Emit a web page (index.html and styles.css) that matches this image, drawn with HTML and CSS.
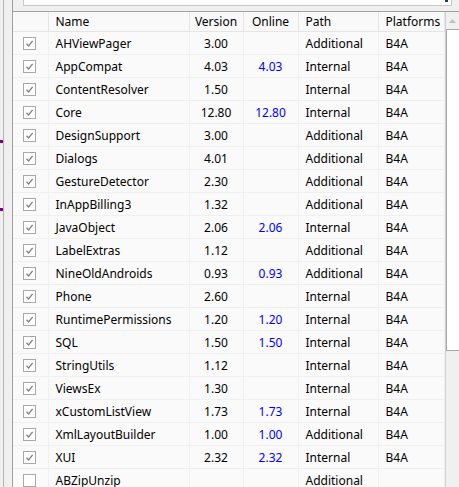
FILE: index.html
```html
<!DOCTYPE html>
<html>
<head>
<meta charset="utf-8">
<link rel="stylesheet" href="styles.css">
</head>
<body>
<div class="app">
  <div class="strip">
    <div class="marks"><span class="mark m1"></span><span class="mark m2"></span></div>
    <div class="vline"></div>
  </div>
  <div class="main">
    <div class="topbar"><div class="search"><span class="search-glyph"></span></div></div>
    <div class="gridwrap">
      <table class="grid">
        <colgroup>
          <col class="c-chk"><col class="c-name"><col class="c-ver"><col class="c-onl"><col class="c-path"><col class="c-plat">
        </colgroup>
        <thead>
          <tr><th></th><th class="l">Name</th><th>Version</th><th>Online</th><th class="l">Path</th><th class="l">Platforms</th></tr>
        </thead>
        <tbody id="rows"></tbody>
      </table>
      <div class="scrollbar">
        <div class="sb-up"><svg width="7" height="4" viewBox="0 0 7 4"><polygon points="0,4 7,4 3.5,0" fill="#c0c0c0"/></svg></div>
        <div class="sb-thumb"></div>
        <div class="sb-track"></div>
      </div>
    </div>
  </div>
</div>
<script>
const data = [
 ["AHViewPager","3.00","","Additional","B4A",1],
 ["AppCompat","4.03","4.03","Internal","B4A",1],
 ["ContentResolver","1.50","","Internal","B4A",1],
 ["Core","12.80","12.80","Internal","B4A",1],
 ["DesignSupport","3.00","","Additional","B4A",1],
 ["Dialogs","4.01","","Additional","B4A",1],
 ["GestureDetector","2.30","","Additional","B4A",1],
 ["InAppBilling3","1.32","","Additional","B4A",1],
 ["JavaObject","2.06","2.06","Internal","B4A",1],
 ["LabelExtras","1.12","","Additional","B4A",1],
 ["NineOldAndroids","0.93","0.93","Additional","B4A",1],
 ["Phone","2.60","","Internal","B4A",1],
 ["RuntimePermissions","1.20","1.20","Internal","B4A",1],
 ["SQL","1.50","1.50","Internal","B4A",1],
 ["StringUtils","1.12","","Internal","B4A",1],
 ["ViewsEx","1.30","","Internal","B4A",1],
 ["xCustomListView","1.73","1.73","Internal","B4A",1],
 ["XmlLayoutBuilder","1.00","1.00","Additional","B4A",1],
 ["XUI","2.32","2.32","Internal","B4A",1],
 ["ABZipUnzip","","","Additional","",0]
];
const tick = '<svg width="11" height="11" viewBox="0 0 11 11"><path d="M2.5 5.8 L4.6 8 L8.6 2.8" fill="none" stroke="#808080" stroke-width="1.3"/></svg>';
document.getElementById('rows').innerHTML = data.map(r =>
 `<tr><td class="chk"><span class="box">${r[5]?tick:''}</span></td><td class="l">${r[0]}</td><td>${r[1]}</td><td class="onl">${r[2]}</td><td class="l">${r[3]}</td><td class="l">${r[4]}</td></tr>`
).join('');
</script>
</body>
</html>
```
FILE: styles.css
```css
html, body { margin: 0; padding: 0; }
body {
  background: #f0f0f0;
  font-family: "Noto Sans", "Segoe UI", sans-serif;
  font-size: 12px;
  color: #000;
  width: 459px;
  height: 487px;
  overflow: hidden;
}
.app { display: flex; height: 487px; overflow: hidden; }
.strip {
  width: 12px;
  display: flex;
  border-right: 1px solid #a0a0a0;
  flex: none;
}
.marks { width: 3px; display: flex; flex-direction: column; }
.mark { display: block; width: 3px; height: 3px; background: #800080; flex: none; }
.m1 { margin-top: 140px; }
.m2 { margin-top: 65px; }
.vline { width: 1px; background: #b4b4b4; }
.main { width: 446px; display: flex; flex-direction: column; min-height: 0; overflow: hidden; }
.topbar { height: 11px; padding-left: 10px; flex: none; }
.search {
  width: 427px;
  height: 5px;
  background: #fff;
  border: 1px solid #c8c8c8;
  border-top: none;
  position: relative;
}
.search-glyph {
  position: absolute; right: 3px; top: 0;
  width: 3px; height: 2px; background: #1e3a6e;
}
.gridwrap { display: flex; border-top: 1px solid #a0a0a0; flex: none; }
.grid {
  border-collapse: collapse;
  table-layout: fixed;
  width: 431px;
  background: #fafafa;
}
.c-chk { width: 35px; }
.c-name { width: 141px; }
.c-ver { width: 54px; }
.c-onl { width: 55px; }
.c-path { width: 80px; }
.c-plat { width: 66px; }
th {
  height: 19px;
  padding: 0;
  font-weight: normal;
  text-align: center;
  border-right: 1px solid #e5e5e5;
  border-bottom: 1px solid #e5e5e5;
  background: #f9f9f9;
  white-space: nowrap;
  overflow: hidden;
}
td {
  height: 22px;
  padding: 0;
  text-align: center;
  border-right: 1px solid #f0f0f0;
  border-bottom: 1px solid #f0f0f0;
  white-space: nowrap;
  overflow: hidden;
}
.l { text-align: left; padding-left: 7px; }
.onl { color: #0000ff; }
.chk { text-align: left; padding-left: 10px; }
.box {
  display: flex;
  align-items: center;
  justify-content: center;
  width: 11px;
  height: 11px;
  border: 1px solid #a8a8a8;
  background: #fff;
  margin-top: 1px;
}
.scrollbar {
  width: 14px;
  border-left: 1px solid #d0d0d0;
  display: flex;
  flex-direction: column;
  align-self: stretch;
}
.sb-up {
  height: 17px;
  flex: none;
  display: flex;
  align-items: center;
  justify-content: center;
  background: #f0f0f0;
}
.sb-thumb {
  height: 320px;
  flex: none;
  background: #fff;
  border: 1px solid #a8a8a8;
  border-right: none;
}
.sb-track { flex: 1; background: #f0f0f0; }
```
